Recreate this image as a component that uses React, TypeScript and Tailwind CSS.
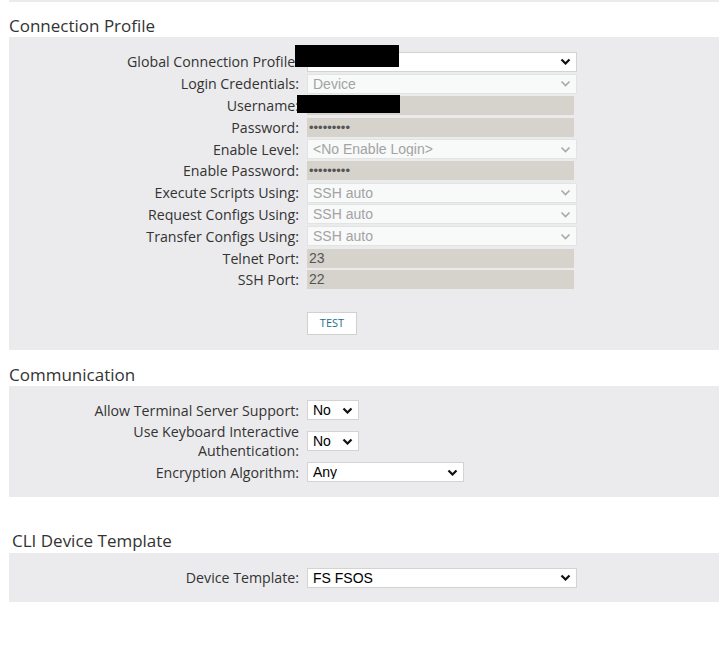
import React from "react";

function Chevron({ muted }: { muted?: boolean }) {
  return (
    <svg width="11" height="7" viewBox="0 0 11 7" className="shrink-0">
      <path
        d="M1.5 1.5l4 4 4-4"
        fill="none"
        stroke={muted ? "#a8a8a8" : "#111"}
        strokeWidth={muted ? 1.6 : 2.2}
      />
    </svg>
  );
}

function Select({
  value,
  disabled,
  width = "w-[270px]",
}: {
  value: string;
  disabled?: boolean;
  width?: string;
}) {
  return (
    <div
      className={`${width} flex h-[20px] items-center justify-between border pl-[5px] pr-[5px] font-['Liberation_Sans',Arial,sans-serif] text-[14px] ${
        disabled
          ? "border-[#e2e3e3] bg-[#f8f9f9] text-[#a3a3a3]"
          : "border-[#d3d3d3] bg-white text-black"
      }`}
    >
      <span className="truncate leading-none">{value}</span>
      <Chevron muted={disabled} />
    </div>
  );
}

function TextBox({ value, dots }: { value: string; dots?: boolean }) {
  return (
    <div
      className={`flex h-[19px] w-[267px] items-center bg-[#d6d2cc] pl-[2px] font-['Liberation_Sans',Arial,sans-serif] text-[#555] ${
        dots ? "text-[13px]" : "text-[14px]"
      }`}
    >
      {value}
    </div>
  );
}

function Row({
  label,
  children,
  redact,
}: {
  label: string;
  children: React.ReactNode;
  redact?: string;
}) {
  return (
    <div className="relative flex min-h-[21.8px] items-center">
      <div className="flex w-[298px] shrink-0 justify-end pr-[8px]">
        <span className="max-w-[225px] text-right text-[14.2px] leading-[19px] text-[#333]">
          {label}
        </span>
      </div>
      {children}
      {redact && <div className={`absolute bg-black ${redact}`} />}
    </div>
  );
}

export default function App() {
  const dots = "•••••••••";
  return (
    <div className="min-h-[650px] w-[719px] bg-white font-['Open_Sans',sans-serif]">
      <div className="ml-[9px] h-[2px] bg-[#ebebeb]" />

      {/* Connection Profile */}
      <h2 className="ml-[9px] mt-[13px] text-[17px] leading-[22px] text-[#333]">
        Connection Profile
      </h2>
      <section className="ml-[9px] bg-[#ebebed] pb-[15px] pt-[14px]">
        <Row label="Global Connection Profile:" redact="left-[286px] top-[-6px] h-[22px] w-[104px]">
          <Select value="" />
        </Row>
        <Row label="Login Credentials:">
          <Select value="Device" disabled />
        </Row>
        <Row label="Username:" redact="left-[288px] top-[0px] h-[18px] w-[103px]">
          <TextBox value="" />
        </Row>
        <Row label="Password:">
          <TextBox value={dots} dots />
        </Row>
        <Row label="Enable Level:">
          <Select value="<No Enable Login>" disabled />
        </Row>
        <Row label="Enable Password:">
          <TextBox value={dots} dots />
        </Row>
        <Row label="Execute Scripts Using:">
          <Select value="SSH auto" disabled />
        </Row>
        <Row label="Request Configs Using:">
          <Select value="SSH auto" disabled />
        </Row>
        <Row label="Transfer Configs Using:">
          <Select value="SSH auto" disabled />
        </Row>
        <Row label="Telnet Port:">
          <TextBox value="23" />
        </Row>
        <Row label="SSH Port:">
          <TextBox value="22" />
        </Row>
        <div className="ml-[298px] mt-[18px]">
          <button className="h-[23px] w-[50px] border border-[#d0d0d0] bg-white text-[11px] text-[#22708c]">
            TEST
          </button>
        </div>
      </section>

      {/* Communication */}
      <h2 className="ml-[9px] mt-[14px] text-[17px] leading-[22px] text-[#333]">
        Communication
      </h2>
      <section className="ml-[9px] flex flex-col gap-[1px] bg-[#ebebed] pb-[14px] pt-[14px]">
        <Row label="Allow Terminal Server Support:">
          <Select value="No" width="w-[52px]" />
        </Row>
        <Row label="Use Keyboard Interactive Authentication:">
          <Select value="No" width="w-[52px]" />
        </Row>
        <Row label="Encryption Algorithm:">
          <Select value="Any" width="w-[157px]" />
        </Row>
      </section>

      {/* CLI Device Template */}
      <h2 className="ml-[12px] mt-[33px] text-[17px] leading-[22px] text-[#333]">
        CLI Device Template
      </h2>
      <section className="ml-[9px] mt-[1px] bg-[#ebebed] py-[13.5px]">
        <Row label="Device Template:">
          <Select value="FS FSOS" />
        </Row>
      </section>
    </div>
  );
}
